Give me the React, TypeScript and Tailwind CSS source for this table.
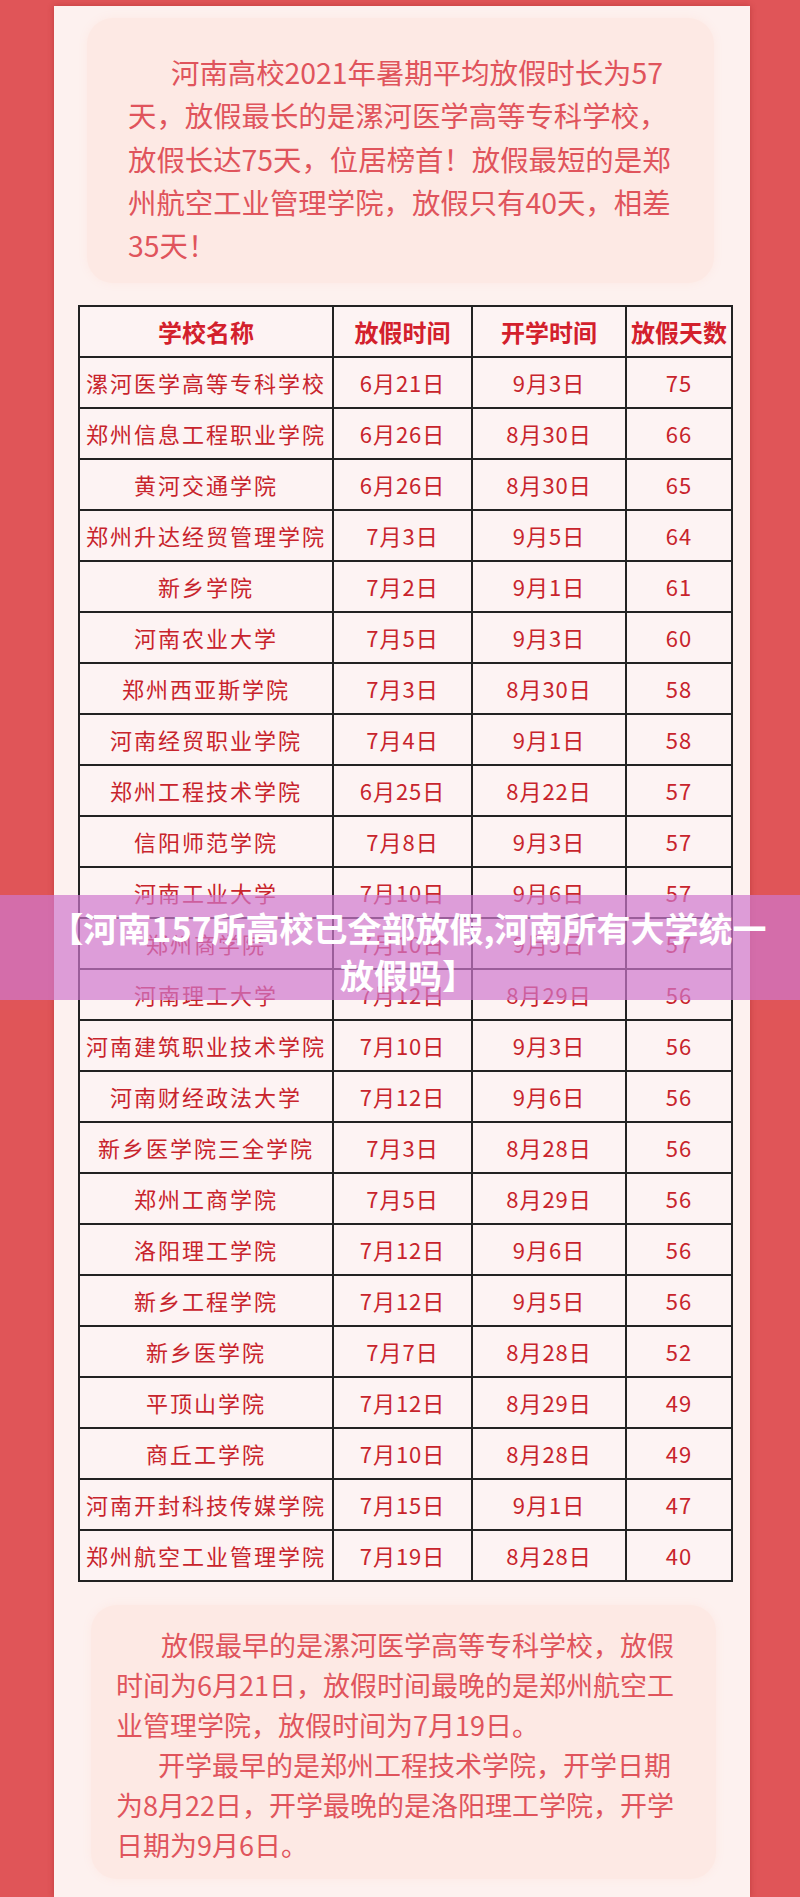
import React from 'react';

const rows: [string, string, string, string][] = [
  ['漯河医学高等专科学校', '6月21日', '9月3日', '75'],
  ['郑州信息工程职业学院', '6月26日', '8月30日', '66'],
  ['黄河交通学院', '6月26日', '8月30日', '65'],
  ['郑州升达经贸管理学院', '7月3日', '9月5日', '64'],
  ['新乡学院', '7月2日', '9月1日', '61'],
  ['河南农业大学', '7月5日', '9月3日', '60'],
  ['郑州西亚斯学院', '7月3日', '8月30日', '58'],
  ['河南经贸职业学院', '7月4日', '9月1日', '58'],
  ['郑州工程技术学院', '6月25日', '8月22日', '57'],
  ['信阳师范学院', '7月8日', '9月3日', '57'],
  ['河南工业大学', '7月10日', '9月6日', '57'],
  ['郑州商学院', '7月10日', '9月5日', '57'],
  ['河南理工大学', '7月12日', '8月29日', '56'],
  ['河南建筑职业技术学院', '7月10日', '9月3日', '56'],
  ['河南财经政法大学', '7月12日', '9月6日', '56'],
  ['新乡医学院三全学院', '7月3日', '8月28日', '56'],
  ['郑州工商学院', '7月5日', '8月29日', '56'],
  ['洛阳理工学院', '7月12日', '9月6日', '56'],
  ['新乡工程学院', '7月12日', '9月5日', '56'],
  ['新乡医学院', '7月7日', '8月28日', '52'],
  ['平顶山学院', '7月12日', '8月29日', '49'],
  ['商丘工学院', '7月10日', '8月28日', '49'],
  ['河南开封科技传媒学院', '7月15日', '9月1日', '47'],
  ['郑州航空工业管理学院', '7月19日', '8月28日', '40'],
];

const App = () => {
  return (
    <div className="relative w-[800px] h-[1897px] overflow-hidden bg-[#e05558] pt-[6px] font-['Noto_Sans_CJK_SC',sans-serif]">
      <div className="ml-[54px] w-[696px] h-full bg-[#fdf1ef] pt-[12px] shadow-[0_0_6px_rgba(150,30,30,0.45)]">
        {/* intro box */}
        <div className="ml-[33px] w-[627px] h-[265px] rounded-[26px] bg-[#fde9e4] shadow-[0_0_10px_#fde9e4] pl-[41px] pt-[32px] text-[28.4px] leading-[43.3px] text-[#e0545c] whitespace-nowrap">
          <div className="pl-[43px]">河南高校2021年暑期平均放假时长为57</div>
          <div>天，放假最长的是漯河医学高等专科学校，</div>
          <div>放假长达75天，位居榜首！放假最短的是郑</div>
          <div>州航空工业管理学院，放假只有40天，相差</div>
          <div>35天！</div>
        </div>

        {/* table */}
        <div className="ml-[24px] mt-[22px] w-[653px]">
          <table className="w-[653px] table-fixed border-collapse bg-[#fdf3f3]">
            <colgroup>
              <col className="w-[254px]" />
              <col className="w-[139px]" />
              <col className="w-[154px]" />
              <col className="w-[106px]" />
            </colgroup>
            <thead>
              <tr className="h-[51px]">
                {['学校名称', '放假时间', '开学时间', '放假天数'].map((h) => (
                  <th key={h} className="border-2 border-[#222] p-0 text-center text-[24px] font-bold text-[#d3202c] whitespace-nowrap">
                    {h}
                  </th>
                ))}
              </tr>
            </thead>
            <tbody>
              {rows.map((r) => (
                <tr key={r[0]} className="h-[51px]">
                  <td className="border-2 border-[#222] p-0 text-center text-[22px] tracking-[2px] text-[#c8242c] whitespace-nowrap">{r[0]}</td>
                  <td className="border-2 border-[#222] p-0 text-center text-[22px] tracking-[1px] text-[#c8242c] whitespace-nowrap">{r[1]}</td>
                  <td className="border-2 border-[#222] p-0 text-center text-[22px] tracking-[1px] text-[#c8242c] whitespace-nowrap">{r[2]}</td>
                  <td className="border-2 border-[#222] p-0 text-center text-[22px] tracking-[1px] text-[#c8242c]">{r[3]}</td>
                </tr>
              ))}
            </tbody>
          </table>
        </div>

        {/* summary box */}
        <div className="ml-[37px] mt-[23px] w-[625px] h-[274px] rounded-[26px] bg-[#fde9e4] shadow-[0_0_10px_#fde9e4] pl-[25px] pt-[20px] text-[27px] leading-[40px] text-[#e0545c] whitespace-nowrap">
          <div className="pl-[45px]">放假最早的是漯河医学高等专科学校，放假</div>
          <div>时间为6月21日，放假时间最晚的是郑州航空工</div>
          <div>业管理学院，放假时间为7月19日。</div>
          <div className="pl-[42px]">开学最早的是郑州工程技术学院，开学日期</div>
          <div>为8月22日，开学最晚的是洛阳理工学院，开学</div>
          <div>日期为9月6日。</div>
        </div>
      </div>

      {/* title banner over the table */}
      <div className="absolute left-0 top-[895px] w-full h-[105px] bg-[rgba(206,120,205,0.7)] pt-[9px] pl-[16px] text-center text-[34px] leading-[47px] font-bold text-white">
        【河南157所高校已全部放假,河南所有大学统一
        <br />
        放假吗】
      </div>
    </div>
  );
};

export default App;
